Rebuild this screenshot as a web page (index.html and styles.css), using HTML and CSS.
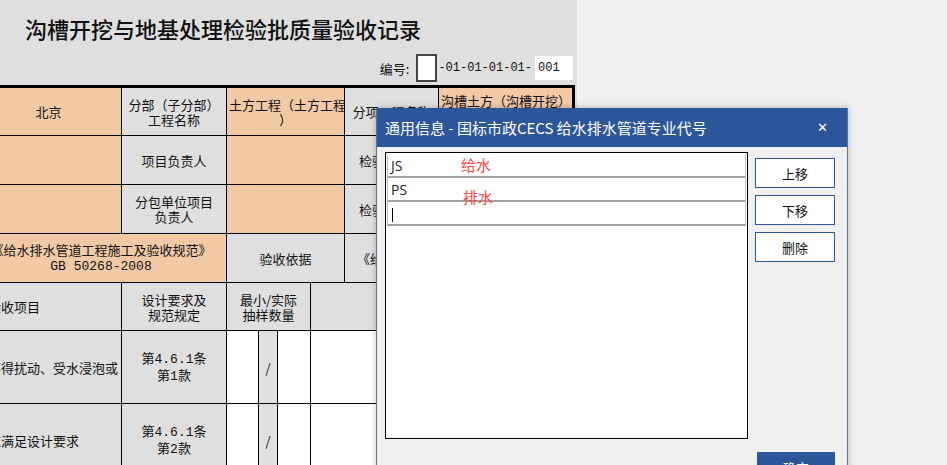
FILE: index.html
```html
<!DOCTYPE html>
<html lang="zh-CN">
<head>
    <meta charset="UTF-8">
    <title>沟槽开挖与地基处理检验批质量验收记录</title>
    <link rel="stylesheet" href="styles.css">
</head>
<body>
    <div class="sheet">
        <div class="sheet-head">
            <h1 class="sheet-title">沟槽开挖与地基处理检验批质量验收记录</h1>
            <div class="code-line">
                <span class="code-label">编号:</span>
                <span class="code-box"></span>
                <span class="code-mid">-01-01-01-01-</span>
                <span class="code-num">001</span>
            </div>
        </div>
        <table class="record">
            <colgroup>
                <col style="width:146px">
                <col style="width:105px">
                <col style="width:32px">
                <col style="width:19px">
                <col style="width:33px">
                <col style="width:34px">
                <col style="width:94px">
                <col style="width:135px">
            </colgroup>
            <tr class="r49">
                <td class="fill">北京</td>
                <td class="label">分部（子分部）<br>工程名称</td>
                <td class="fill nowrap" colspan="4">土方工程（土方工程<br>）</td>
                <td class="label">分项工程名称</td>
                <td class="fill top left nowrap">沟槽土方（沟槽开挖）</td>
            </tr>
            <tr class="r49">
                <td class="fill"></td>
                <td class="label">项目负责人</td>
                <td class="fill" colspan="4"></td>
                <td class="label">检验批容量</td>
                <td class="fill"></td>
            </tr>
            <tr class="r49">
                <td class="fill"></td>
                <td class="label">分包单位项目<br>负责人</td>
                <td class="fill" colspan="4"></td>
                <td class="label">检验批部位</td>
                <td class="fill"></td>
            </tr>
            <tr class="r49">
                <td class="fill nowrap" colspan="2">《给水排水管道工程施工及验收规范》<br><span class="mono">GB 50268-2008</span></td>
                <td class="label" colspan="4">验收依据</td>
                <td class="label left nowrap" colspan="2">《给水排水管道工程施工及验收规范》</td>
            </tr>
            <tr class="r48">
                <td class="label left">验收项目</td>
                <td class="label">设计要求及<br>规范规定</td>
                <td class="label" colspan="3">最小/实际<br>抽样数量</td>
                <td class="label" colspan="3">检查记录</td>
            </tr>
            <tr class="r73">
                <td class="label left nowrap">不得扰动、受水浸泡或</td>
                <td class="label">第<span class="mono">4.6.1</span>条<br>第<span class="mono">1</span>款</td>
                <td class="blank"></td>
                <td class="strip">/</td>
                <td class="blank"></td>
                <td class="blank" colspan="3"></td>
            </tr>
            <tr class="r73">
                <td class="label left nowrap">应满足设计要求</td>
                <td class="label">第<span class="mono">4.6.1</span>条<br>第<span class="mono">2</span>款</td>
                <td class="blank"></td>
                <td class="strip">/</td>
                <td class="blank"></td>
                <td class="blank" colspan="3"></td>
            </tr>
        </table>
    </div>

    <div class="dialog">
        <div class="dialog-bar">
            <span class="dialog-title">通用信息 - 国标市政CECS 给水排水管道专业代号</span>
            <span class="dialog-close">✕</span>
        </div>
        <div class="dialog-body">
            <div class="dialog-main">
                <div class="code-list">
                    <div class="code-row">JS</div>
                    <div class="code-row">PS</div>
                    <div class="code-row"><span class="caret"></span></div>
                    <span class="note note-1">给水</span>
                    <span class="note note-2">排水</span>
                </div>
                <div class="side-buttons">
                    <button class="side-btn">上移</button>
                    <button class="side-btn">下移</button>
                    <button class="side-btn">删除</button>
                </div>
            </div>
            <div class="dialog-foot">
                <button class="ok-btn">确定</button>
            </div>
        </div>
    </div>
</body>
</html>
```

FILE: styles.css
```css
body {
    margin: 0;
    width: 947px;
    height: 465px;
    overflow: hidden;
    background-color: #efefef;
    font-family: "Noto Sans CJK SC", sans-serif;
    position: relative;
}
.sheet {
    width: 577px;
    height: 465px;
    overflow: hidden;
    background-color: #dfdfdf;
}
.sheet-head {
    height: 85px;
    position: relative;
}
.sheet-title {
    margin: 0;
    padding: 13px 0 0 25px;
    font-size: 22px;
    font-weight: 500;
    line-height: 31px;
    color: #111;
}
.code-line {
    display: flex;
    align-items: center;
    justify-content: flex-end;
    padding-right: 4px;
    margin-top: 10px;
    font-size: 13px;
    color: #111;
}
.code-label {
    margin-right: 7px;
}
.code-box {
    width: 17px;
    height: 24px;
    border: 2px solid #444;
    background-color: #fff;
}
.code-mid {
    font-family: "Liberation Mono", monospace;
    font-size: 12px;
    margin: 0 3px 0 1px;
}
.code-num {
    width: 38px;
    height: 24px;
    line-height: 24px;
    background-color: #fff;
    font-family: "Liberation Mono", monospace;
    font-size: 12px;
    padding-left: 3px;
    box-sizing: border-box;
}
.record {
    border-collapse: collapse;
    table-layout: fixed;
    width: 598px;
    margin-left: -25px;
    border-top: 3px solid #000;
    border-right: 3px solid #000;
    font-size: 13px;
    line-height: 15px;
    color: #111;
}
.record td {
    border: 1px solid #000;
    text-align: center;
    vertical-align: middle;
    padding: 0 2px;
    overflow: hidden;
}
.r49 { height: 49px; }
.r48 { height: 48px; }
.r73 { height: 73px; }
.fill { background-color: #f1c9a5; }
.label { background-color: #dfdfdf; }
.blank { background-color: #fff; }
.strip { background-color: #dfdfdf; }
.record td.left {
    text-align: left;
    padding-left: 12px;
}
.record td.top {
    vertical-align: top;
    padding: 5px 0 0 2px;
}
.nowrap { white-space: nowrap; }
.mono { font-family: "Liberation Mono", monospace; }

.dialog {
    position: absolute;
    left: 376px;
    top: 108px;
    width: 472px;
    height: 380px;
    background-color: #f0f0f0;
    border-left: 1px solid #5d7292;
    border-right: 1px solid #5d7292;
    box-sizing: border-box;
    box-shadow: 0 0 6px rgba(0, 0, 0, 0.25);
}
.dialog-bar {
    height: 39px;
    background-color: #2b579a;
    color: #fff;
    display: flex;
    align-items: center;
    justify-content: space-between;
    padding: 0 19px 0 8px;
}
.dialog-title {
    font-size: 15px;
}
.dialog-close {
    font-size: 13px;
    font-weight: bold;
    font-family: "DejaVu Sans", sans-serif;
}
.dialog-body {
    padding: 5px 12px 0 8px;
}
.dialog-main {
    display: flex;
}
.code-list {
    width: 363px;
    height: 287px;
    background-color: #fff;
    border: 1px solid #000;
    box-sizing: border-box;
    position: relative;
    padding-top: 1px;
}
.code-row {
    height: 22px;
    margin: 0 1px;
    border-bottom: 2px solid #a0a0a0;
    border-left: 1px solid #c0c0c0;
    border-right: 1px solid #c0c0c0;
    font-family: "Open Sans", sans-serif;
    font-size: 14px;
    line-height: 24px;
    padding-left: 3px;
    color: #222;
}
.caret {
    display: inline-block;
    width: 1px;
    height: 14px;
    background-color: #000;
    vertical-align: middle;
    margin-left: 1px;
}
.note {
    position: absolute;
    color: #ff4545;
    font-size: 15px;
    line-height: 18px;
}
.note-1 { left: 75px; top: 3px; }
.note-2 { left: 77px; top: 35px; }
.side-buttons {
    display: flex;
    flex-direction: column;
    gap: 7px;
    margin: 6px 0 0 7px;
}
.side-btn {
    width: 80px;
    height: 30px;
    background-color: #fff;
    border: 1px solid #2b579a;
    font-family: "Noto Sans CJK SC", sans-serif;
    font-size: 13px;
    color: #111;
    padding: 0;
}
.dialog-foot {
    display: flex;
    justify-content: flex-end;
    margin-top: 13px;
}
.ok-btn {
    width: 78px;
    height: 30px;
    background-color: #2b579a;
    border: none;
    color: #fff;
    font-family: "Noto Sans CJK SC", sans-serif;
    font-size: 13px;
    padding: 0;
}
```
